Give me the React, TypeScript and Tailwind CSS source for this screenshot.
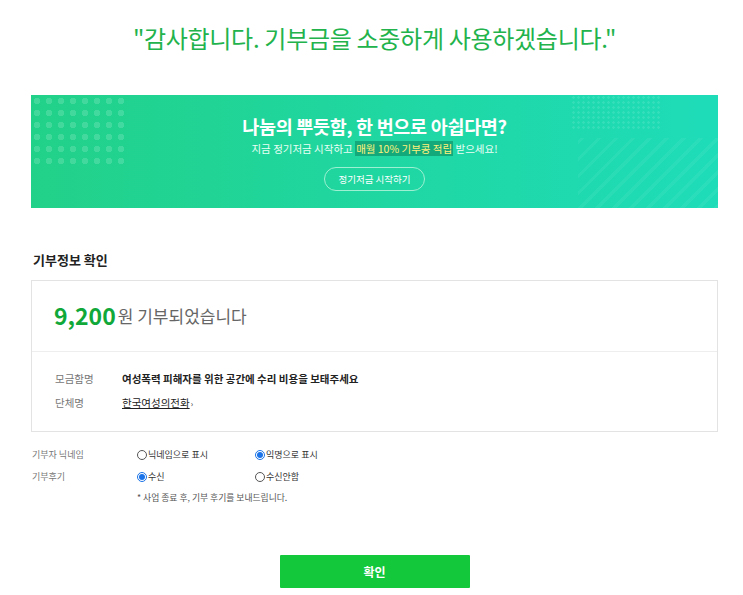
import React from "react"

const FONT = "font-['Noto_Sans_CJK_KR','Noto_Sans',sans-serif]"

function Radio({ checked, label }: { checked?: boolean; label: string }) {
    return (
        <label className="flex items-center gap-[1px] text-[9px] text-[#333]">
            <span
                className={`w-[10px] h-[10px] rounded-full border flex items-center justify-center ${
                    checked ? "border-[#1a73e8]" : "border-[#555]"
                }`}
            >
                {checked && <span className="w-[6px] h-[6px] rounded-full bg-[#1a73e8]" />}
            </span>
            {label}
        </label>
    )
}

export default function App() {
    return (
        <div className={`min-h-screen bg-white ${FONT}`}>
            <div className="ml-[31px] w-[687px]">
                {/* TITLE */}
                <h1 className="pt-[18px] h-[95px] text-center text-[24px] leading-[40px] text-[#22b34c] tracking-[-0.3px]">
                    "감사합니다. 기부금을 소중하게 사용하겠습니다."
                </h1>

                {/* BANNER */}
                <div className="relative h-[113px] overflow-hidden bg-[linear-gradient(90deg,#22d189_0%,#1fd8a6_60%,#1fdcb9_100%)] flex flex-col items-center">
                    <div className="absolute left-0 top-0 w-[95px] h-[70px] opacity-15 bg-[radial-gradient(circle,#ffffff_3px,transparent_3.5px)] bg-[length:12px_12px]" />
                    <div className="absolute left-[540px] top-0 w-[90px] h-[35px] opacity-10 bg-[radial-gradient(circle,#ffffff_1px,transparent_1.5px)] bg-[length:5px_5px]" />
                    <div className="absolute right-0 bottom-0 w-[140px] h-[70px] opacity-5 bg-[repeating-linear-gradient(-45deg,#ffffff_0px,#ffffff_3px,transparent_3px,transparent_12px)]" />
                    <p className="relative mt-[18px] text-[18.5px] leading-[26px] font-bold text-white tracking-[-0.3px]">
                        나눔의 뿌듯함, 한 번으로 아쉽다면?
                    </p>
                    <p className="relative mt-[1px] text-[10.5px] leading-[18px] text-[#eafff5]">
                        지금 정기저금 시작하고{" "}
                        <span className="bg-[#14a97a] text-[#fff27a] px-[1px]">매월 10% 기부콩 적립</span> 받으세요!
                    </p>
                    <button className="relative mt-[9px] h-[24px] px-[13px] rounded-full border border-[#9ef0d2] text-[9.5px] text-white">
                        정기저금 시작하기
                    </button>
                </div>

                {/* INFO */}
                <h2 className="mt-[42px] text-[13px] leading-[20px] font-bold text-[#222] pl-[2px]">기부정보 확인</h2>
                <div className="mt-[10px] border border-[#e3e3e3]">
                    <div className="h-[71px] flex items-center pl-[22px] pb-[2px] border-b border-[#eeeeee]">
                        <span className="text-[23px] font-bold text-[#11a83a]">9,200</span>
                        <span className="ml-[2px] text-[17px] text-[#666] mt-[1px]">원 기부되었습니다</span>
                    </div>
                    <div className="pl-[23px] pt-[15px] pb-[15px] text-[10.5px] leading-[24px]">
                        <div className="flex">
                            <span className="w-[67px] text-[#777]">모금함명</span>
                            <span className="font-bold text-[#222]">여성폭력 피해자를 위한 공간에 수리 비용을 보태주세요</span>
                        </div>
                        <div className="flex">
                            <span className="w-[67px] text-[#777]">단체명</span>
                            <span className="text-[#222]">
                                <span className="underline">한국여성의전화</span>
                                <span className="text-[8px] ml-[1px]">›</span>
                            </span>
                        </div>
                    </div>
                </div>

                {/* OPTIONS */}
                <div className="mt-[12px] pl-[1px] text-[9px] leading-[22px]">
                    <div className="flex items-center">
                        <span className="w-[105px] text-[#777]">기부자 닉네임</span>
                        <div className="w-[118px]">
                            <Radio label="닉네임으로 표시" />
                        </div>
                        <Radio checked label="익명으로 표시" />
                    </div>
                    <div className="flex items-center">
                        <span className="w-[105px] text-[#777]">기부후기</span>
                        <div className="w-[118px]">
                            <Radio checked label="수신" />
                        </div>
                        <Radio label="수신안함" />
                    </div>
                    <p className="pl-[105px] text-[8.8px] text-[#555] leading-[20px]">* 사업 종료 후, 기부 후기를 보내드립니다.</p>
                </div>

                {/* CONFIRM */}
                <div className="mt-[47px] flex justify-center">
                    <button className="w-[190px] h-[33px] bg-[#14c83c] text-white text-[12px] font-bold rounded-[1px]">
                        확인
                    </button>
                </div>
            </div>
        </div>
    )
}
